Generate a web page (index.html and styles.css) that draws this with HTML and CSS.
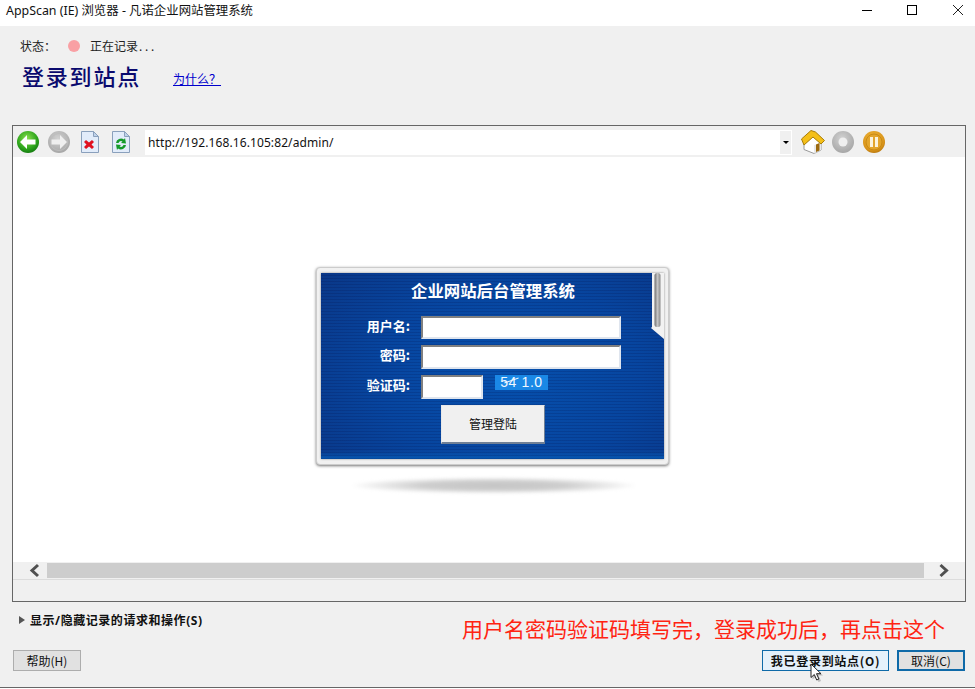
FILE: index.html
```html
<!DOCTYPE html>
<html lang="zh-CN">
<head>
<meta charset="utf-8">
<title>AppScan (IE) 浏览器</title>
<link rel="stylesheet" href="styles.css">
</head>
<body>
<div class="window">
  <header class="titlebar">
    <span class="title">AppScan (IE) 浏览器 - 凡诺企业网站管理系统</span>
    <div class="winctrls">
      <svg class="winbtn" width="45" height="26" viewBox="0 0 45 26"><path d="M22 10.500h10" stroke="#000" fill="none"/></svg>
      <svg class="winbtn" width="45" height="26" viewBox="0 0 45 26"><rect x="22.500" y="5.500" width="9" height="9" stroke="#000" fill="none"/></svg>
      <svg class="winbtn" width="45" height="26" viewBox="0 0 45 26"><path d="M23 5l10 10M33 5L23 15" stroke="#222" fill="none"/></svg>
    </div>
  </header>

  <main class="body">
    <section class="intro">
      <div class="status">
        <span class="status-label">状态：</span>
        <span class="dot"></span>
        <span class="status-text">正在记录<span class="dots">...</span></span>
      </div>
      <div class="headline">
        <h1>登录到站点</h1>
        <a class="why" href="#">为什么？</a>
      </div>
    </section>

    <section class="frame">
      <div class="toolbar">
        <svg class="ic ic-back" width="24" height="24" viewBox="0 0 24 24">
          <defs>
            <radialGradient id="g1" cx=".45" cy=".35" r=".75"><stop offset="0" stop-color="#8be04f"/><stop offset=".6" stop-color="#2ea51c"/><stop offset="1" stop-color="#0a6b0c"/></radialGradient>
            <radialGradient id="g2" cx=".45" cy=".35" r=".75"><stop offset="0" stop-color="#d2d2d2"/><stop offset="1" stop-color="#a0a0a0"/></radialGradient>
            <radialGradient id="g3" cx=".45" cy=".35" r=".75"><stop offset="0" stop-color="#f4bc3c"/><stop offset=".7" stop-color="#d8931a"/><stop offset="1" stop-color="#a86a08"/></radialGradient>
          </defs>
          <circle cx="12" cy="12" r="11" fill="url(#g1)"/>
          <path d="M4 12l7-7v4.500h8.500v5H11V19z" fill="#fff"/>
        </svg>
        <svg class="ic ic-fwd" width="24" height="24" viewBox="0 0 24 24">
          <circle cx="12" cy="12" r="11" fill="url(#g2)"/>
          <circle cx="12" cy="12" r="8.500" fill="none" stroke="#bdbdbd"/>
          <path d="M20 12l-7-7v4.500H4.500v5H13V19z" fill="#efefef"/>
        </svg>
        <svg class="ic ic-doc" width="20" height="24" viewBox="0 0 20 24">
          <path d="M1.500 1.500h12l5 5v16h-17z" fill="#e2ecfa" stroke="#8aa0bc"/>
          <path d="M13.500 1.500v5h5z" fill="#bfd2ea" stroke="#8aa0bc"/>
          <path d="M6 10l3 2.500L12 10l2 2-2.500 2.500L14 17l-2 2-3-2.500L6 19l-2-2 2.500-2.500L4 12z" fill="#e01020"/>
        </svg>
        <svg class="ic ic-doc2" width="20" height="24" viewBox="0 0 20 24">
          <path d="M1.500 1.500h12l5 5v16h-17z" fill="#e2ecfa" stroke="#8aa0bc"/>
          <path d="M13.500 1.500v5h5z" fill="#bfd2ea" stroke="#8aa0bc"/>
          <path d="M5 13a5 5 0 0 1 8-3.500l1-1.500 1 5.500-5-.5 1.500-1.500a3 3 0 0 0-4 1.500zM15 15a5 5 0 0 1-8 3.500l-1 1.500-1-5.500 5 .5-1.500 1.500a3 3 0 0 0 4-1.500z" fill="#159a2a"/>
        </svg>
        <div class="url">
          <span class="url-text">http://192.168.16.105:82/admin/</span>
          <span class="url-drop"><svg width="6" height="3" viewBox="0 0 6 3"><path d="M0 0h6L3 3z" fill="#000"/></svg></span>
        </div>
        <svg class="ic ic-home" width="25" height="25" viewBox="0 0 25 25">
          <path d="M4 14l9-8 8 7v7l-7 3.500L4 19.500z" fill="#fff" stroke="#9a9a9a"/>
          <path d="M14 23.500l7-3.500v-7l-7 2z" fill="#e8e8e8"/>
          <path d="M1.500 9L11 .5l4.500 1.500 9 8.500-3.500 3.500-8-7-9 8z" fill="#f4bf18" stroke="#a87c08" stroke-linejoin="round"/>
          <path d="M16 14.500l3.500-1.500v7.500L16 22z" fill="#9c6a10"/>
        </svg>
        <svg class="ic ic-stop" width="24" height="24" viewBox="0 0 24 24">
          <circle cx="12" cy="12" r="11" fill="url(#g2)"/>
          <circle cx="12" cy="12" r="4.500" fill="#efefef"/>
        </svg>
        <svg class="ic ic-pause" width="24" height="24" viewBox="0 0 24 24">
          <circle cx="12" cy="12" r="11" fill="url(#g3)"/>
          <circle cx="12" cy="12" r="8" fill="#e3a52c" stroke="#c98a14"/>
          <rect x="8" y="7" width="3" height="10" fill="#fbf3dd"/>
          <rect x="13" y="7" width="3" height="10" fill="#fbf3dd"/>
        </svg>
      </div>

      <div class="viewport">
        <div class="login-wrap">
          <div class="card">
            <div class="panel">
              <h2>企业网站后台管理系统</h2>
              <div class="form">
                <label>用户名:</label><div class="field wide"></div>
                <label>密码:</label><div class="field wide"></div>
                <label>验证码:</label>
                <div class="code-row">
                  <div class="field short"></div>
                  <span class="captcha">54 1.0</span>
                </div>
              </div>
              <div class="submit">管理登陆</div>
              <svg class="notch" width="13" height="67" viewBox="0 0 13 67">
                <defs><linearGradient id="hg" x1="0" x2="1" y1="0" y2="0"><stop offset="0" stop-color="#6f6f6f"/><stop offset=".5" stop-color="#c4c4c4"/><stop offset="1" stop-color="#8a8a8a"/></linearGradient></defs>
                <path d="M1 0h12v66L0 55 1 54z" fill="#f2f2f2"/>
                <rect x="3.500" y="0" width="6" height="54" rx="2.500" fill="url(#hg)"/>
              </svg>
            </div>
          </div>
          <div class="card-shadow"></div>
        </div>
      </div>

      <div class="hscroll">
        <svg class="arrow arrow-left" width="17" height="17" viewBox="0 0 17 17"><path d="M12 3L6 8.500l6 5.500" fill="none" stroke="#505050" stroke-width="3"/></svg>
        <div class="thumb"></div>
        <svg class="arrow arrow-right" width="17" height="17" viewBox="0 0 17 17"><path d="M5.500 3l6 5.500-6 5.500" fill="none" stroke="#505050" stroke-width="3"/></svg>
      </div>
      <div class="frame-foot"></div>
    </section>

    <div class="toggle"><span class="tri"></span><span>显示/隐藏记录的请求和操作(S)</span></div>

    <footer class="actions">
      <button class="btn help">帮助(H)</button>
      <span class="spacer"></span>
      <button class="btn primary">我已登录到站点(O)</button>
      <button class="btn cancel">取消(C)</button>
    </footer>

    <div class="note">用户名密码验证码填写完，登录成功后，再点击这个</div>
    <svg class="cursor" width="15" height="20" viewBox="0 0 15 20">
      <path d="M2.500 2.500v14l3.500-3 2.500 5.500 2.500-1-2.500-5.500h4.500z" fill="#8a8a8a" opacity=".5"/>
      <path d="M1 1v13.500l3.300-3 2.400 5.500 2.200-1-2.400-5.300H11z" fill="#fff" stroke="#222" stroke-width="1"/>
    </svg>
  </main>
</div>
</body>
</html>
```

FILE: styles.css
```css
* { box-sizing: border-box; }
html, body { margin: 0; padding: 0; background: #fff; }
body {
  width: 975px;
  height: 689px;
  overflow: hidden;
  font-family: "Noto Sans", "Noto Sans CJK SC", sans-serif;
  font-size: 12px;
  color: #000;
}
.window { height: 689px; display: flex; flex-direction: column; }

.titlebar {
  height: 26px;
  flex: none;
  background: #fff;
  display: flex;
  align-items: flex-start;
  justify-content: space-between;
  padding-left: 6px;
}
.title { font-size: 12.4px; line-height: 22px; color: #111; }
.winctrls { display: flex; }
.winbtn { display: block; }

.body {
  position: relative;
  height: 662px;
  flex: none;
  background: #f0f0f0;
  border-bottom: 1px solid #666;
  padding: 0 9px 0 12px;
  display: flex;
  flex-direction: column;
}

.intro { height: 99px; flex: none; padding: 12px 0 0 8px; }
.status { display: flex; align-items: center; height: 16px; font-size: 12px; color: #222; }
.status-label { width: 48px; }
.dot { width: 12px; height: 12px; border-radius: 50%; background: #f9a0a4; margin-right: 10px; }
.dots { letter-spacing: 2.800px; margin-left: 1px; }
.headline { display: flex; align-items: center; margin-top: 4px; padding-left: 2px; }
h1 {
  margin: 0;
  font-family: "Noto Sans CJK SC", sans-serif;
  font-size: 22px;
  font-weight: 500;
  line-height: 34px;
  letter-spacing: 1.800px;
  color: #0a0a6e;
  width: 151px;
}
.why { font-size: 12px; color: #0000cc; text-decoration: underline; margin-top: 8px; }

.frame {
  height: 477px;
  flex: none;
  border: 1px solid #666;
  display: flex;
  flex-direction: column;
}
.toolbar {
  height: 31px;
  flex: none;
  display: flex;
  align-items: center;
  padding: 1px 0 0 3px;
  background: #f0f0f0;
}
.ic { display: block; flex: none; }
.ic-fwd { margin-left: 7px; }
.ic-doc { margin-left: 9px; }
.ic-doc2 { margin-left: 11px; }
.url {
  width: 647px;
  height: 25px;
  margin: 0 8px 0 14px;
  background: #fff;
  border: 1px solid #fff;
  display: flex;
  align-items: center;
  flex: none;
}
.url-text { flex: 1; padding-left: 2px; font-size: 12px; letter-spacing: .1px; color: #111; }
.url-drop {
  width: 11px;
  height: 23px;
  background: #f0f0f0;
  display: flex;
  align-items: center;
  justify-content: center;
}
.url-drop svg { display: block; }
.ic-stop { margin-left: 6px; }
.ic-pause { margin-left: 7px; }

.viewport { height: 405px; flex: none; background: #fff; }
.login-wrap { width: 353px; margin-left: 303px; padding-top: 110px; }
.card {
  width: 353px;
  height: 198px;
  padding: 5px 4px;
  background: #f1f1f1;
  border: 1px solid #ccc;
  border-radius: 4px;
  box-shadow: 0 1px 3px rgba(0,0,0,.55);
}
.panel {
  position: relative;
  height: 186px;
  background:
    repeating-linear-gradient(0deg, rgba(0,0,50,.14) 0 1px, transparent 1px 3px),
    linear-gradient(0deg, #0658b2 0, rgba(6,88,178,0) 8px),
    radial-gradient(ellipse 70% 90% at 55% 55%, #0650ad 0%, #07459f 55%, #0a3787 100%);
  box-shadow: 0 0 2px rgba(0,0,0,.4);
  overflow: hidden;
}
h2 {
  margin: 0;
  padding-top: 6px;
  height: 42px;
  text-align: center;
  font-family: "Noto Sans CJK SC", sans-serif;
  font-size: 16.400px;
  line-height: 23px;
  font-weight: 700;
  color: #fff;
  padding-left: 1px;
}
.form {
  display: grid;
  grid-template-columns: 89px 200px;
  grid-template-rows: 23px 24px 24px;
  column-gap: 11px;
  row-gap: 6px;
  margin-top: 1px;
}
.form label {
  text-align: right;
  font-family: "Noto Sans CJK SC", sans-serif;
  font-size: 13px;
  font-weight: 700;
  line-height: 20px;
  color: #fff;
}
.field {
  height: 100%;
  background: #fff;
  border: 2px solid #dfe5ee;
  border-top-color: #808080;
  border-left-color: #808080;
}
.wide { width: 200px; }
.short { width: 62px; flex: none; }
.code-row { display: flex; gap: 12px; align-items: flex-start; height: 24px; }
.captcha {
  position: relative;
  width: 53px;
  height: 15px;
  background: #1a88e6;
  color: #f0f8ff;
  font-family: "Liberation Sans", sans-serif;
  font-size: 14px;
  line-height: 15px;
  letter-spacing: .6px;
  text-align: center;
  white-space: nowrap;
  overflow: hidden;
}
.captcha::after {
  content: "";
  position: absolute;
  left: 9px;
  top: 5px;
  width: 15px;
  height: 1px;
  background: #f0f8ff;
  transform: rotate(-20deg);
}
.submit {
  width: 104px;
  height: 39px;
  margin: 6px 0 0 120px;
  background: #f0f0f0;
  border: 1px solid #e8e8e8;
  border-right-color: #6f7f95;
  border-bottom: 2px solid #6f7f95;
  text-align: center;
  line-height: 37px;
  font-size: 12px;
  color: #111;
}
.notch { position: absolute; right: 0; top: 0; display: block; }
.card-shadow {
  width: 288px;
  height: 17px;
  margin: 12px 0 0 34px;
  border-radius: 50%;
  background: radial-gradient(ellipse 50% 50% at center, #c4c4c4 0%, #cdcdcd 50%, rgba(255,255,255,0) 100%);
  filter: blur(1.500px);
}

.hscroll {
  height: 17px;
  flex: none;
  background: #f0f0f0;
  display: flex;
  align-items: center;
  padding: 0 13px 0 13px;
}
.arrow { display: block; flex: none; width: 17px; }
.arrow-left { margin-right: 4px; }
.arrow-right { margin-left: 11px; }
.thumb { flex: 1; height: 15px; background: #cdcdcd; }
.frame-foot { flex: 1; background: #f0f0f0; border-top: 1px solid #dcdcdc; }

.toggle {
  height: 36px;
  flex: none;
  padding-left: 7px;
  display: flex;
  align-items: center;
  font-size: 12px;
  font-weight: 700;
  letter-spacing: .55px;
  color: #111;
}
.tri {
  width: 0;
  height: 0;
  border-left: 6px solid #555;
  border-top: 4px solid transparent;
  border-bottom: 4px solid transparent;
  margin-right: 5px;
}
.actions { display: flex; align-items: flex-start; padding: 12px 0 0 1px; }
.spacer { flex: 1; }
.btn {
  height: 21px;
  padding: 0;
  font-family: "Noto Sans CJK SC", sans-serif;
  font-size: 12px;
  line-height: 17px;
  color: #111;
  background: #e1e1e1;
  border: 1px solid #adadad;
}
.help { width: 68px; }
.primary { width: 127px; background: #e5f1fb; border-color: #0f6aa8; font-weight: 700; letter-spacing: .7px; margin-right: 8px; }
.cancel { width: 68px; border: 2px solid #0f6aa8; margin-right: 1px; }

.note {
  position: absolute;
  left: 462px;
  top: 587px;
  font-family: "Noto Sans CJK SC", sans-serif;
  font-size: 21px;
  line-height: 30px;
  color: #ff2412;
  white-space: nowrap;
}
.cursor { position: absolute; left: 810px; top: 637px; display: block; }
```
